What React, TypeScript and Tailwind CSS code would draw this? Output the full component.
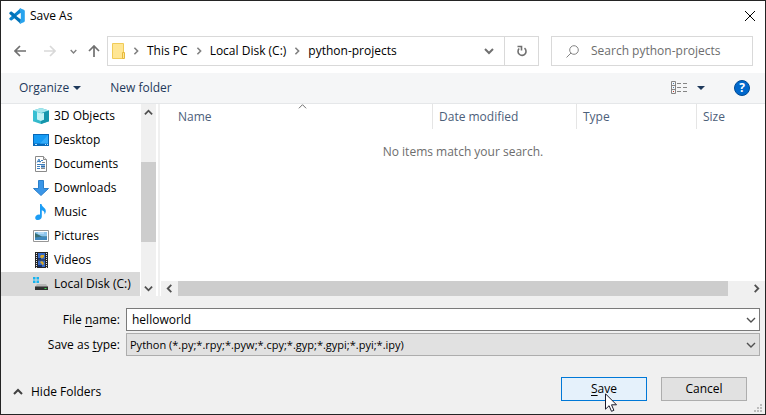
import { useState } from "react";
import type { ReactNode } from "react";

type ChevronProps = { dir: "up" | "down" | "left" | "right"; className?: string };

const chevronPaths = {
  up: "M1 7 5 3l4 4",
  down: "M1 3l4 4 4-4",
  left: "M7 1 3 5l4 4",
  right: "M3 1l4 4-4 4",
} satisfies Record<ChevronProps["dir"], string>;

function Chevron({ dir, className = "" }: ChevronProps) {
  return (
    <svg viewBox="0 0 10 10" className={`shrink-0 ${className}`} fill="none" stroke="currentColor" aria-hidden="true">
      <path d={chevronPaths[dir]} />
    </svg>
  );
}

function Triangle() {
  return (
    <svg viewBox="0 0 8 4" className="h-1 w-2 shrink-0" fill="#1e395b" aria-hidden="true">
      <path d="M0 0h8L4 4z" />
    </svg>
  );
}

function Icon({ children }: { children: ReactNode }) {
  return (
    <svg viewBox="0 0 16 16" className="size-4 shrink-0" aria-hidden="true">
      {children}
    </svg>
  );
}

function EditorLogo() {
  return (
    <Icon>
      <path d="M11.500.3 12 5 2.600 12.400 1.800 12.400.3 11.200V10.300z" fill="#0a84cf" />
      <path d="M.3 5.700V4.800L1.800 3.600h.8L12 11l-.5 4.700z" fill="#0072b8" />
      <path d="M11.200.2 15.300 2 15.800 3v10l-.5 1-4.100 1.800-.7-.3 1-1V1.600l-1-1z" fill="#27a3ee" />
      <path d="M11.600 4.800v6.400L7.300 8z" fill="#fff" />
    </Icon>
  );
}

const places = [
  {
    name: "3D Objects",
    icon: (
      <Icon>
        <path d="M0 2.500 8 0l8 2.500v10.700L8 16 0 13.200z" fill="#35b9cb" />
        <path d="M0 2.500 8 0l8 2.500L8 5z" fill="#a4e6ec" />
        <path d="M0 2.500 4 4v8L0 13.200z" fill="#37bfd2" />
        <path d="M4 4l4 1.200L12 4v7.500L8 13l-4-1.500z" fill="#c4f2f5" />
        <path d="M8 5.200 16 2.500v10.700L8 16v-3l3-1.200V5z" fill="#1595ab" />
      </Icon>
    ),
  },
  {
    name: "Desktop",
    icon: (
      <Icon>
        <path d="M0 2h16v12H0z" fill="#0768b8" />
        <path d="M1 3h14v8.500H1z" fill="#159bf4" />
        <path d="M15 3v8.500H7z" fill="#35acfa" />
        <path d="M2 12.500h2M12 12.500h1M14 12.500h1" stroke="#b9e2ff" />
      </Icon>
    ),
  },
  {
    name: "Documents",
    icon: (
      <Icon>
        <path d="M2.500.5h8l3 3v12h-11z" fill="#fff" stroke="#8a8a8a" />
        <path d="M10.500.5v3h3" fill="#e8e8e8" stroke="#8a8a8a" />
        <path d="M4 6.500 6 3l1 3.500M5 5.500h3M8 4.500h2M4 8.500h8M4 10.500h3M4 12.500h3" stroke="#3e7fbe" fill="none" />
        <path d="M9 6.500h3M8 12.500h4" stroke="#8a8a8a" />
        <path d="M8 9.500h4v2H8z" fill="#2e6cab" />
      </Icon>
    ),
  },
  {
    name: "Downloads",
    icon: (
      <Icon>
        <path d="M5.500.5h5v8h5L8 15.500.5 8.500h5z" fill="#3a96e8" stroke="#2b7fca" />
      </Icon>
    ),
  },
  {
    name: "Music",
    icon: (
      <Icon>
        <path
          d="M7 0h1.500c.3 3 4.500 3.800 4.300 7.300-.1 1.500-.7 2.500-1.400 3.200.5-2.600-.9-4-2.600-4.300v6.300C8.800 14.800 7 16 5 16c-1.800 0-2.800-.9-2.800-2.300 0-1.900 1.800-3.200 3.600-3.200.5 0 .9.100 1.200.3z"
          fill="#1c9df5"
        />
      </Icon>
    ),
  },
  {
    name: "Pictures",
    icon: (
      <Icon>
        <path d="M.5 2.500h15v11H.5z" fill="#fff" stroke="#979797" />
        <path d="M2 4h12v8H2z" fill="#8ec6ee" />
        <path d="M2 5l4 2 3 1.500h5V10H2z" fill="#386f75" />
        <path d="M2 9.500l6-.8h6V12H2z" fill="#3f88bd" />
        <path d="M5 5h6" stroke="#d8ecfa" />
      </Icon>
    ),
  },
  {
    name: "Videos",
    icon: (
      <Icon>
        <path d="M2 0h13v16H2z" fill="#262626" />
        <path d="M3.500 1v15M13.500 1v15" stroke="#e8e8e8" strokeDasharray="1 1" />
        <path d="M5 1h7v6.500H5zM5 8.500h7V15H5z" fill="#3569c6" />
        <path d="M8 3h3v2l-2 1.500L7 5zM7 10l2-1 2 2-1 2.500z" fill="#d9a928" />
        <path d="M5 6h3v1.500H5zM5 13h4v2H5z" fill="#122f70" />
      </Icon>
    ),
  },
  {
    name: "Local Disk (C:)",
    icon: (
      <Icon>
        <path d="M0 1h2.500v2.500H0zM3.500 1H6v2.500H3.500zM0 4.500h2.500V7H0zM3.500 4.500H6V7H3.500z" fill="#16b3ef" />
        <path d="M4 8h9l2 3H2z" fill="#b8b8b8" />
        <path d="M2 10.500h13V14H2z" fill="#303030" />
        <path d="M11.500 12h2v1h-2z" fill="#35e04b" />
      </Icon>
    ),
  },
];

const crumbs = ["This PC", "Local Disk (C:)", "python-projects"];

function TitleBar() {
  return (
    <header className="flex h-[30px] items-center bg-white pr-[9px] pl-2">
      <EditorLogo />
      <h1 className="ml-[5px] flex-1">Save As</h1>
      <button type="button" aria-label="Close">
        <svg viewBox="0 0 12 12" className="size-3" stroke="#000" aria-hidden="true">
          <path d="M1 1l10 10M11 1 1 11" />
        </svg>
      </button>
    </header>
  );
}

function NavigationBar() {
  return (
    <div className="flex items-center bg-white pt-[5px] pr-3 pb-[7px] pl-[13px]">
      <button type="button" aria-label="Back">
        <svg viewBox="0 0 12 12" className="size-3" fill="none" stroke="#707070" strokeWidth="1.700" aria-hidden="true">
          <path d="M12 6H1M6 1 1 6l5 5" />
        </svg>
      </button>
      <button type="button" aria-label="Forward" disabled className="ml-[18px]">
        <svg viewBox="0 0 12 12" className="size-3" fill="none" stroke="#d9d9d9" strokeWidth="1.700" aria-hidden="true">
          <path d="M0 6h11M6 1l5 5-5 5" />
        </svg>
      </button>
      <button type="button" aria-label="Recent locations" className="ml-3.5 text-[#808080]">
        <Chevron dir="down" className="size-[7px] stroke-2" />
      </button>
      <button type="button" aria-label="Up" className="ml-[11px]">
        <svg viewBox="0 0 12 12" className="size-3" fill="none" stroke="#707070" strokeWidth="1.700" aria-hidden="true">
          <path d="M6 12V1M1 6l5-5 5 5" />
        </svg>
      </button>
      <div className="ml-[7px] flex h-[30px] flex-1 items-center border border-[#d9d9d9] pl-1">
        <svg viewBox="0 0 13 16" className="h-4 w-[13px] shrink-0" aria-hidden="true">
          <path d="M.5.5h11v15H.5z" fill="#ffe694" stroke="#f0cb58" />
          <path d="M10.500 9.500h2v6h-2z" fill="#ffe694" stroke="#e6b93d" />
        </svg>
        <ol className="flex flex-1 items-center">
          {crumbs.map((crumb) => (
            <li key={crumb} className="flex items-center">
              <Chevron dir="right" className="mx-[7px] size-2 stroke-2 text-[#808080]" />
              <button type="button" className="whitespace-nowrap">
                {crumb}
              </button>
            </li>
          ))}
        </ol>
        <button type="button" aria-label="Previous locations" className="mr-2.5 text-[#707070]">
          <Chevron dir="down" className="size-2.5 stroke-2" />
        </button>
        <button
          type="button"
          aria-label="Refresh"
          className="flex h-full w-[34px] items-center justify-center border-l border-[#d9d9d9]"
        >
          <svg viewBox="0 0 12 12" className="size-3" fill="none" stroke="#707070" strokeWidth="1.600" aria-hidden="true">
            <path d="M8.500 3.200A4 4 0 1 1 3.200 3.500M1.500 1.500h4v4" />
          </svg>
        </button>
      </div>
      <div className="ml-3 flex h-[30px] w-[202px] items-center border border-[#d9d9d9] pl-3.5">
        <svg viewBox="0 0 13 13" className="size-[13px] shrink-0" fill="none" stroke="#858585" aria-hidden="true">
          <circle cx="8" cy="5" r="4.300" />
          <path d="M5 8 .5 12.500" />
        </svg>
        <input
          type="search"
          aria-label="Search python-projects"
          placeholder="Search python-projects"
          className="ml-3 min-w-0 flex-1 outline-none placeholder:text-[#6d6d6d]"
        />
      </div>
    </div>
  );
}

function Toolbar() {
  return (
    <div className="flex h-[31px] items-center border-b border-[#e5e7e9] bg-[#f5f6f7] pr-[15px] pl-[18px] text-[#1e395b]">
      <button type="button" className="flex items-center gap-1">
        Organize <Triangle />
      </button>
      <button type="button" className="ml-[29px]">
        New folder
      </button>
      <button type="button" aria-label="Change your view" className="ml-auto flex items-center gap-2.5">
        <svg viewBox="0 0 16 14" className="h-3.5 w-4" fill="none" stroke="#858585" aria-hidden="true">
          <path d="M.5.5h4v12h-4zM.5 4.500h4M.5 8.500h4" />
          <path d="M6 2.500h4M12 2.500h4M6 6.500h4M12 6.500h4M6 10.500h4M12 10.500h4" />
          <path d="M2 2.500h1M2 6.500h1" stroke="#4f7fae" />
          <path d="M2 10.500h1" stroke="#c0392b" />
        </svg>
        <Triangle />
      </button>
      <button
        type="button"
        aria-label="Help"
        className="ml-[29px] flex size-4 items-center justify-center rounded-full border border-[#004a94] bg-[#0068cc] font-bold text-white"
      >
        ?
      </button>
    </div>
  );
}

function FolderTree() {
  const [selected, setSelected] = useState("Local Disk (C:)");

  return (
    <nav aria-label="Folders" className="flex w-[159px] shrink-0 border-r-2 border-[#f0f0f0]">
      <ul className="w-[140px]">
        {places.map((place) => (
          <li key={place.name}>
            <button
              type="button"
              onClick={() => setSelected(place.name)}
              className={`flex h-6 w-[139px] items-center gap-[5px] pl-8 whitespace-nowrap ${
                place.name === selected ? "bg-[#d9d9d9]" : "bg-white"
              }`}
            >
              {place.icon}
              {place.name}
            </button>
          </li>
        ))}
      </ul>
      <div className="flex w-[15px] flex-col items-center bg-[#f0f0f0] text-[#505050]">
        <Chevron dir="up" className="mt-1 size-[9px] stroke-2" />
        <div className="mt-[45px] h-20 w-full bg-[#cdcdcd]" />
        <Chevron dir="down" className="mt-auto mb-[3px] size-[9px] stroke-2" />
      </div>
    </nav>
  );
}

function FileList() {
  return (
    <div className="flex min-w-0 flex-1 flex-col pl-px">
      <table className="w-full table-fixed border-separate border-spacing-0">
        <thead>
          <tr className="h-[25px] text-left text-[#4c607a]">
            <th className="relative w-[272px] border-r border-[#e5e5e5] pl-[17px] font-normal">
              Name
              <Chevron dir="up" className="absolute top-[-2px] left-[137px] size-[9px] text-[#606060]" />
            </th>
            <th className="w-36 border-r border-[#e5e5e5] pl-1.5 font-normal">Date modified</th>
            <th className="w-[120px] border-r border-[#e5e5e5] pl-1.5 font-normal">Type</th>
            <th className="pl-1.5 font-normal">Size</th>
          </tr>
        </thead>
        <tbody>
          <tr>
            <td colSpan={4} className="pt-[15px] text-center text-[#6d6d6d]">
              No items match your search.
            </td>
          </tr>
        </tbody>
      </table>
      <div className="mt-auto flex h-[15px] items-center bg-[#f0f0f0] text-[#505050]">
        <Chevron dir="left" className="ml-1 size-[9px] stroke-2" />
        <div className="mr-6 ml-1 h-full flex-1 bg-[#cdcdcd]" />
        <Chevron dir="right" className="mr-1 size-[9px] stroke-2" />
      </div>
    </div>
  );
}

function SaveForm() {
  const [fileName, setFileName] = useState("helloworld");

  return (
    <form onSubmit={(event) => event.preventDefault()}>
      <div className="grid grid-cols-[119px_1fr] items-center gap-x-1.5 gap-y-0.5 pt-3 pr-[5px]">
        <label htmlFor="file-name" className="text-right">
          File <span className="underline underline-offset-2">n</span>ame:
        </label>
        <div className="flex h-[23px] items-center border border-[#7a7a7a] bg-white pr-[3px]">
          <input
            id="file-name"
            value={fileName}
            onChange={(event) => setFileName(event.target.value)}
            className="min-w-0 flex-1 pl-[5px] outline-none"
          />
          <button type="button" aria-label="Recent file names" className="text-[#505050]">
            <Chevron dir="down" className="size-2.5 stroke-[1.4]" />
          </button>
        </div>
        <label htmlFor="file-type" className="text-right">
          Save as <span className="underline underline-offset-2">t</span>ype:
        </label>
        <div className="relative">
          <select
            id="file-type"
            className="block h-[23px] w-full appearance-none border border-[#adadad] bg-[#e1e1e1] pl-[3px] text-[11px] outline-none"
          >
            <option>Python (*.py;*.rpy;*.pyw;*.cpy;*.gyp;*.gypi;*.pyi;*.ipy)</option>
          </select>
          <Chevron
            dir="down"
            className="pointer-events-none absolute top-[7px] right-1 size-2.5 stroke-[1.4] text-[#505050]"
          />
        </div>
      </div>
      <div className="relative flex items-center pt-[21px] pr-[18px] pb-[13px] pl-3">
        <button type="button" className="mt-1.5 mr-auto flex items-center gap-2">
          <Chevron dir="up" className="size-2.5 stroke-2 text-[#404040]" />
          Hide Folders
        </button>
        <button type="submit" className="relative h-6 w-[86px] border border-[#0078d7] bg-[#e5f1fb]">
          <span className="underline underline-offset-2">S</span>ave
          <svg viewBox="0 0 12 19" className="absolute top-[15px] left-[43px] h-[19px] w-3" aria-hidden="true">
            <path d="M.5.800v15.400l3.600-3.500 2.400 5.600 2.400-1-2.400-5.500h5z" fill="#fff" stroke="#1b1b2b" />
          </svg>
        </button>
        <button type="button" className="ml-3.5 h-6 w-[86px] border border-[#adadad] bg-[#e1e1e1]">
          Cancel
        </button>
        <svg viewBox="0 0 8 8" className="absolute right-[3px] bottom-0.5 size-2" fill="#bdbdbd" aria-hidden="true">
          <path d="M6 0h2v2H6zM3 3h2v2H3zM6 3h2v2H6zM0 6h2v2H0zM3 6h2v2H3zM6 6h2v2H6z" />
        </svg>
      </div>
    </form>
  );
}

export default function App() {
  return (
    <main className="flex min-h-screen flex-col border border-[#242424] bg-[#f0f0f0] font-['Open_Sans','Noto_Sans',sans-serif] text-[12px] leading-4 text-black">
      <TitleBar />
      <NavigationBar />
      <Toolbar />
      <div className="flex flex-1 bg-white">
        <FolderTree />
        <FileList />
      </div>
      <SaveForm />
    </main>
  );
}
